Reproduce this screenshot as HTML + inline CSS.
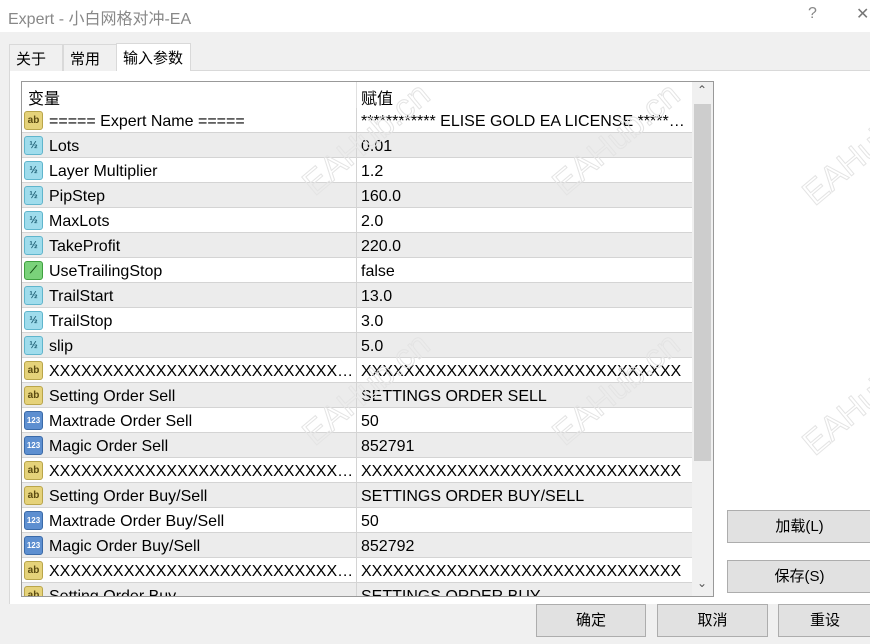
<!DOCTYPE html>
<html><head><meta charset="utf-8"><style>
*{margin:0;padding:0;box-sizing:border-box}
html,body{width:870px;height:644px;overflow:hidden}
body{background:#f0f0f0;font-family:"Liberation Sans","Noto Sans CJK SC",sans-serif;position:relative;font-size:16px;color:#000}
.title{position:absolute;left:0;top:0;width:870px;height:32px;background:#fff;}
.title span{position:absolute;left:8px;top:5px;font-size:16px;color:#888}
.tab{position:absolute;top:44px;height:27px;border:1px solid #d9d9d9;border-bottom:none;background:#f0f0f0;font-size:15px;padding:3px 0 0 6px}
.panel{position:absolute;left:9px;top:70px;width:861px;height:534px;background:#fff;border-top:1px solid #d9d9d9;border-left:1px solid #d9d9d9}
.list{position:absolute;left:21px;top:81px;width:693px;height:516px;border:1px solid #999;background:#fff;overflow:hidden}
.row{position:absolute;left:0;width:670px;height:25px;border-bottom:1px solid #d4d4d4;line-height:24px}
.row.g{background:#ececec}
.row .n{position:absolute;left:27px;top:2px;white-space:nowrap;width:305px;overflow:hidden;text-overflow:ellipsis}
.row .v{position:absolute;left:339px;top:2px;white-space:nowrap;width:328px;overflow:hidden;text-overflow:ellipsis}
.row .sep{position:absolute;left:334px;top:0;width:1px;height:25px;background:#d4d4d4}
.ic{position:absolute;left:2px;top:3px;width:19px;height:19px;border-radius:3px;font-size:10px;font-weight:bold;text-align:center;line-height:17px}
.ab{background:#e5d27a;border:1px solid #b9a54a;color:#5a4a10}
.h{background:#9fdcec;border:1px solid #5fb5cc;color:#1a5a70}
.n3{background:#5d8fd0;border:1px solid #3a6aa8;color:#fff;font-size:8px}
.gr{background:#7ad27a;border:1px solid #3fa03f;color:#135013}
.hdr{position:absolute;left:0;top:0;width:670px;height:26px;background:#fff}
.sb{position:absolute;left:670px;top:0;width:21px;height:516px;background:#f0f0f0}
.thumb{position:absolute;left:2px;top:22px;width:17px;height:357px;background:#cdcdcd}
.btn{position:absolute;height:33px;background:#e1e1e1;border:1px solid #adadad;text-align:center;line-height:31px;font-size:15px}
.wm{position:absolute;color:rgba(0,0,0,0);-webkit-text-stroke:1px #e4e4e4;font-size:34px;transform:rotate(-40deg);white-space:nowrap;font-family:"Liberation Sans",sans-serif}
</style></head><body>
<div class="title"><span>Expert - 小白网格对冲-EA</span><span style="left:808px;top:5px">?</span><span style="left:856px;top:4px;color:#777">✕</span></div>
<div class="panel"></div>
<div class="tab" style="left:9px;width:54px">关于</div>
<div class="tab" style="left:63px;width:54px">常用</div>
<div class="tab" style="left:116px;top:43px;height:28px;width:75px;background:#fff;border-color:#d9d9d9">输入参数</div>
<div class="list">
<div class="hdr"><span style="position:absolute;left:6px;top:3px">变量</span><span style="position:absolute;left:339px;top:3px">赋值</span><div style="position:absolute;left:334px;top:0;width:1px;height:26px;background:#e0e0e0"></div></div>
<div class="row" style="top:26px"><div class="ic ab">ab</div><div class="n">===== Expert Name =====</div><div class="sep"></div><div class="v">************ ELISE GOLD EA LICENSE *******...</div></div>
<div class="row g" style="top:51px"><div class="ic h">½</div><div class="n">Lots</div><div class="sep"></div><div class="v">0.01</div></div>
<div class="row" style="top:76px"><div class="ic h">½</div><div class="n">Layer Multiplier</div><div class="sep"></div><div class="v">1.2</div></div>
<div class="row g" style="top:101px"><div class="ic h">½</div><div class="n">PipStep</div><div class="sep"></div><div class="v">160.0</div></div>
<div class="row" style="top:126px"><div class="ic h">½</div><div class="n">MaxLots</div><div class="sep"></div><div class="v">2.0</div></div>
<div class="row g" style="top:151px"><div class="ic h">½</div><div class="n">TakeProfit</div><div class="sep"></div><div class="v">220.0</div></div>
<div class="row" style="top:176px"><div class="ic gr">⟋</div><div class="n">UseTrailingStop</div><div class="sep"></div><div class="v">false</div></div>
<div class="row g" style="top:201px"><div class="ic h">½</div><div class="n">TrailStart</div><div class="sep"></div><div class="v">13.0</div></div>
<div class="row" style="top:226px"><div class="ic h">½</div><div class="n">TrailStop</div><div class="sep"></div><div class="v">3.0</div></div>
<div class="row g" style="top:251px"><div class="ic h">½</div><div class="n">slip</div><div class="sep"></div><div class="v">5.0</div></div>
<div class="row" style="top:276px"><div class="ic ab">ab</div><div class="n">XXXXXXXXXXXXXXXXXXXXXXXXXXXXXXXXXXXXXX</div><div class="sep"></div><div class="v" style="text-overflow:clip">XXXXXXXXXXXXXXXXXXXXXXXXXXXXXX</div></div>
<div class="row g" style="top:301px"><div class="ic ab">ab</div><div class="n">Setting Order Sell</div><div class="sep"></div><div class="v">SETTINGS ORDER SELL</div></div>
<div class="row" style="top:326px"><div class="ic n3">123</div><div class="n">Maxtrade Order Sell</div><div class="sep"></div><div class="v">50</div></div>
<div class="row g" style="top:351px"><div class="ic n3">123</div><div class="n">Magic Order Sell</div><div class="sep"></div><div class="v">852791</div></div>
<div class="row" style="top:376px"><div class="ic ab">ab</div><div class="n">XXXXXXXXXXXXXXXXXXXXXXXXXXXXXXXXXXXXXX</div><div class="sep"></div><div class="v" style="text-overflow:clip">XXXXXXXXXXXXXXXXXXXXXXXXXXXXXX</div></div>
<div class="row g" style="top:401px"><div class="ic ab">ab</div><div class="n">Setting Order Buy/Sell</div><div class="sep"></div><div class="v">SETTINGS ORDER BUY/SELL</div></div>
<div class="row" style="top:426px"><div class="ic n3">123</div><div class="n">Maxtrade Order Buy/Sell</div><div class="sep"></div><div class="v">50</div></div>
<div class="row g" style="top:451px"><div class="ic n3">123</div><div class="n">Magic Order Buy/Sell</div><div class="sep"></div><div class="v">852792</div></div>
<div class="row" style="top:476px"><div class="ic ab">ab</div><div class="n">XXXXXXXXXXXXXXXXXXXXXXXXXXXXXXXXXXXXXX</div><div class="sep"></div><div class="v" style="text-overflow:clip">XXXXXXXXXXXXXXXXXXXXXXXXXXXXXX</div></div>
<div class="row g" style="top:501px"><div class="ic ab">ab</div><div class="n">Setting Order Buy</div><div class="sep"></div><div class="v">SETTINGS ORDER BUY</div></div>
<div class="sb"><div class="thumb"></div><span style="position:absolute;left:5px;top:1px;font-size:12px;color:#555">⌃</span><span style="position:absolute;left:5px;top:494px;font-size:12px;color:#555">⌄</span></div>
</div>
<div class="btn" style="left:727px;top:510px;width:145px">加载(L)</div>
<div class="btn" style="left:727px;top:560px;width:145px">保存(S)</div>
<div class="btn" style="left:536px;top:604px;width:110px">确定</div>
<div class="btn" style="left:657px;top:604px;width:111px">取消</div>
<div class="btn" style="left:778px;top:604px;width:94px">重设</div>
<div class="wm" style="left:290px;top:120px">EAHub.cn</div>
<div class="wm" style="left:540px;top:120px">EAHub.cn</div>
<div class="wm" style="left:790px;top:130px">EAHub.cn</div>
<div class="wm" style="left:290px;top:370px">EAHub.cn</div>
<div class="wm" style="left:540px;top:370px">EAHub.cn</div>
<div class="wm" style="left:790px;top:380px">EAHub.cn</div>
</body></html>
